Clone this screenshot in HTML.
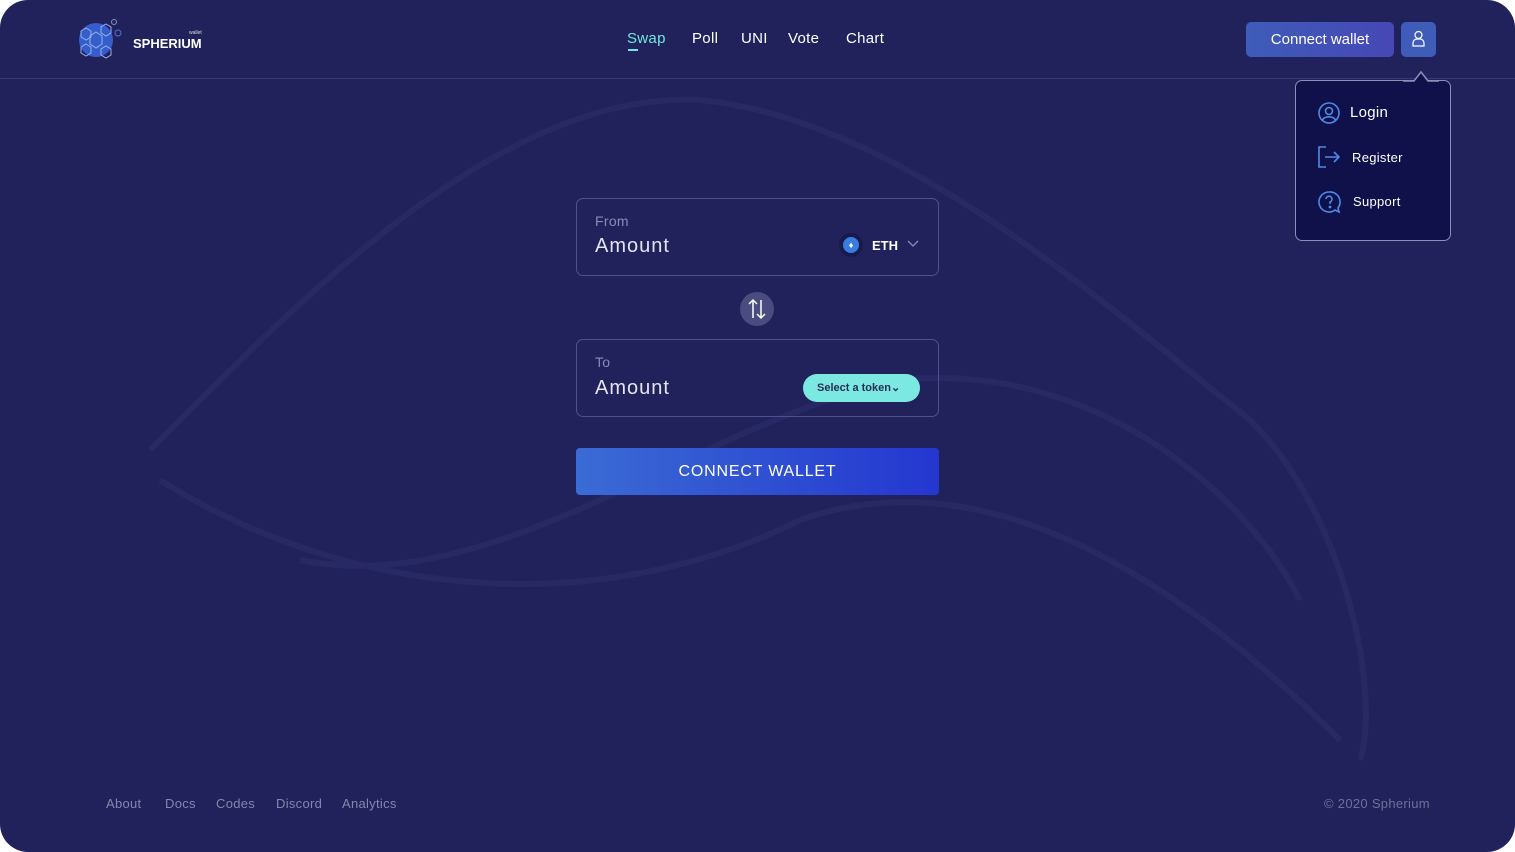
<!DOCTYPE html>
<html><head><style>
*{margin:0;padding:0;box-sizing:border-box}
body{width:1515px;height:852px;background:#fff;font-family:"Liberation Sans",sans-serif;overflow:hidden}
.page{position:absolute;left:0;top:0;width:1515px;height:852px;background:#21225b;border-radius:28px;overflow:hidden}
.hdr{position:absolute;left:0;top:0;width:100%;height:79px;border-bottom:1px solid #34377a}
.nav{position:absolute;top:30px;font-size:15px;color:#fff;letter-spacing:.3px}
.nav span{position:absolute;white-space:nowrap}
.box{position:absolute;left:576px;width:363px;height:78px;border:1px solid #4e5190;border-radius:7px}
.lbl{position:absolute;left:18px;font-size:14px;color:#8a8cb3;letter-spacing:.3px}
.amt{position:absolute;left:18px;font-size:20px;color:#e4e4ef;letter-spacing:1px}
.foot{position:absolute;top:796px;font-size:13px;color:#8486ad;letter-spacing:.3px}
.menu{position:absolute;left:1295px;top:80px;width:156px;height:161px;background:#10114a;border:1.5px solid #8d8fb8;border-radius:7px}
.mi{position:absolute;font-size:14px;color:#fff;letter-spacing:.3px}
</style></head><body><div class="page">
<svg style="position:absolute;left:0;top:0" width="1515" height="852"><g fill="none" stroke="#2c2f6c" stroke-width="6" opacity=".6">
<path d="M150 450 C300 300 500 90 700 100 C900 120 1100 300 1250 420 C1350 520 1380 700 1360 760"/>
<path d="M160 480 C350 600 600 620 800 520 C1000 450 1200 600 1340 740"/>
<path d="M300 560 C500 600 700 420 900 380 C1100 360 1250 500 1300 600"/>
</g></svg>
<div class="hdr"></div>
<svg style="position:absolute;left:78px;top:18px" width="48" height="44" viewBox="0 0 48 44"><circle cx="18" cy="22" r="17" fill="#3a6ee8" opacity=".8"/><g fill="none" stroke="#9ab0ee" stroke-width="1"><polygon points="18,14 24,18 24,26 18,30 12,26 12,18"/><polygon points="8,10 13,13 13,19 8,22 3,19 3,13"/><polygon points="28,6 33,9 33,15 28,18 23,15 23,9"/><polygon points="8,26 13,29 13,35 8,38 3,35 3,29"/><polygon points="28,28 33,31 33,37 28,40 23,37 23,31"/></g><circle cx="40" cy="15" r="3" fill="none" stroke="#4a73d8"/><circle cx="36" cy="4" r="2.5" fill="none" stroke="#8090c0"/></svg>
<div style="position:absolute;left:189px;top:30px;font-size:5px;color:#ddd">wallet</div>
<div style="position:absolute;left:133px;top:36px;font-size:13px;font-weight:bold;color:#fff">SPHERIUM</div>
<div class="nav"><span style="left:627px;color:#71e6e0">Swap</span><span style="left:692px">Poll</span><span style="left:741px">UNI</span><span style="left:788px">Vote</span><span style="left:846px">Chart</span></div>
<div style="position:absolute;left:628px;top:49px;width:10px;height:2px;background:#71e6e0"></div>
<div style="position:absolute;left:1246px;top:22px;width:148px;height:35px;border-radius:5px;background:linear-gradient(90deg,#3e5cb8,#4747b5);color:#fff;font-size:15px;text-align:center;line-height:35px">Connect wallet</div>
<div style="position:absolute;left:1401px;top:22px;width:35px;height:35px;border-radius:5px;background:#3e5cb8"></div>
<svg style="position:absolute;left:1410px;top:30px" width="17" height="18" viewBox="0 0 17 18" fill="none" stroke="#fff" stroke-width="1.2"><circle cx="8.5" cy="5" r="3.5"/><path d="M3 16 V13 a4 4 0 0 1 4-4 h3 a4 4 0 0 1 4 4 V16 Z"/></svg>
<div class="menu"></div>
<svg style="position:absolute;left:1403px;top:68px" width="36" height="14"><path d="M0 13 L11 13 L18 4 L25 13 L36 13" fill="#10114a" stroke="#8d8fb8" stroke-width="1.5"/></svg>
<svg style="position:absolute;left:1317px;top:101px" width="24" height="24" viewBox="0 0 24 24" fill="none" stroke="#4d8ae8" stroke-width="1.6"><circle cx="12" cy="12" r="10"/><circle cx="12" cy="10" r="3.5"/><path d="M5.5 19 a7 5 0 0 1 13 0"/></svg>
<div class="mi" style="left:1350px;top:104px;font-size:15px">Login</div>
<svg style="position:absolute;left:1317px;top:145px" width="24" height="24" viewBox="0 0 24 24" fill="none" stroke="#4d8ae8" stroke-width="1.6"><path d="M9 2 H2 V22 H9"/><path d="M8 12 H22 M17 7 L22 12 L17 17"/></svg>
<div class="mi" style="left:1352px;top:150px;font-size:13px">Register</div>
<svg style="position:absolute;left:1317px;top:190px" width="24" height="24" viewBox="0 0 24 24" fill="none" stroke="#4d8ae8" stroke-width="1.6"><path d="M12 2 a10 10 0 1 0 6 18 l4 2 l-1-4 A10 10 0 0 0 12 2Z"/><path d="M9 9 a3 3 0 1 1 4 3 v2"/><circle cx="13" cy="17" r=".6" fill="#4d8ae8"/></svg>
<div class="mi" style="left:1353px;top:194px;font-size:13px">Support</div>

<div class="box" style="top:198px"><div class="lbl" style="top:14px">From</div><div class="amt" style="top:36px">Amount</div>
<div style="position:absolute;left:262px;top:34px;width:24px;height:24px;border-radius:50%;background:#171a4c"></div>
<div style="position:absolute;left:266px;top:38px;width:16px;height:16px;border-radius:50%;background:#3a7de0;color:#fff;font-size:9px;text-align:center;line-height:16px">♦</div>
<div style="position:absolute;left:295px;top:39px;font-size:13px;font-weight:bold;color:#fff">ETH</div>
<svg style="position:absolute;left:330px;top:41px" width="12" height="8"><path d="M1 1 L6 6 L11 1" fill="none" stroke="#8a8cb3" stroke-width="1.3"/></svg></div>
<div style="position:absolute;left:740px;top:292px;width:34px;height:34px;border-radius:50%;background:#4a4c80"></div>
<svg style="position:absolute;left:747px;top:298px" width="20" height="22" viewBox="0 0 20 22" fill="none" stroke="#fff" stroke-width="1.5"><path d="M6 20 V2 M2 6 L6 2 L10 6 M14 2 V20 M10 16 L14 20 L18 16"/></svg>
<div class="box" style="top:339px"><div class="lbl" style="top:14px">To</div><div class="amt" style="top:37px">Amount</div>
<div style="position:absolute;left:226px;top:34px;width:117px;height:28px;border-radius:14px;background:#7be9e2;color:#2a2d55;font-size:11px;font-weight:bold;line-height:28px;padding-left:14px">Select a token⌄</div></div>
<div style="position:absolute;left:576px;top:448px;width:363px;height:47px;border-radius:4px;background:linear-gradient(90deg,#3b6bd4,#2437d0);color:#fff;font-size:16px;letter-spacing:.8px;text-align:center;line-height:47px">CONNECT WALLET</div>
<div class="foot" style="left:106px">About</div><div class="foot" style="left:165px">Docs</div><div class="foot" style="left:216px">Codes</div><div class="foot" style="left:276px">Discord</div><div class="foot" style="left:342px">Analytics</div>
<div class="foot" style="left:1324px;color:#6f7199">© 2020 Spherium</div>
</div></body></html>
